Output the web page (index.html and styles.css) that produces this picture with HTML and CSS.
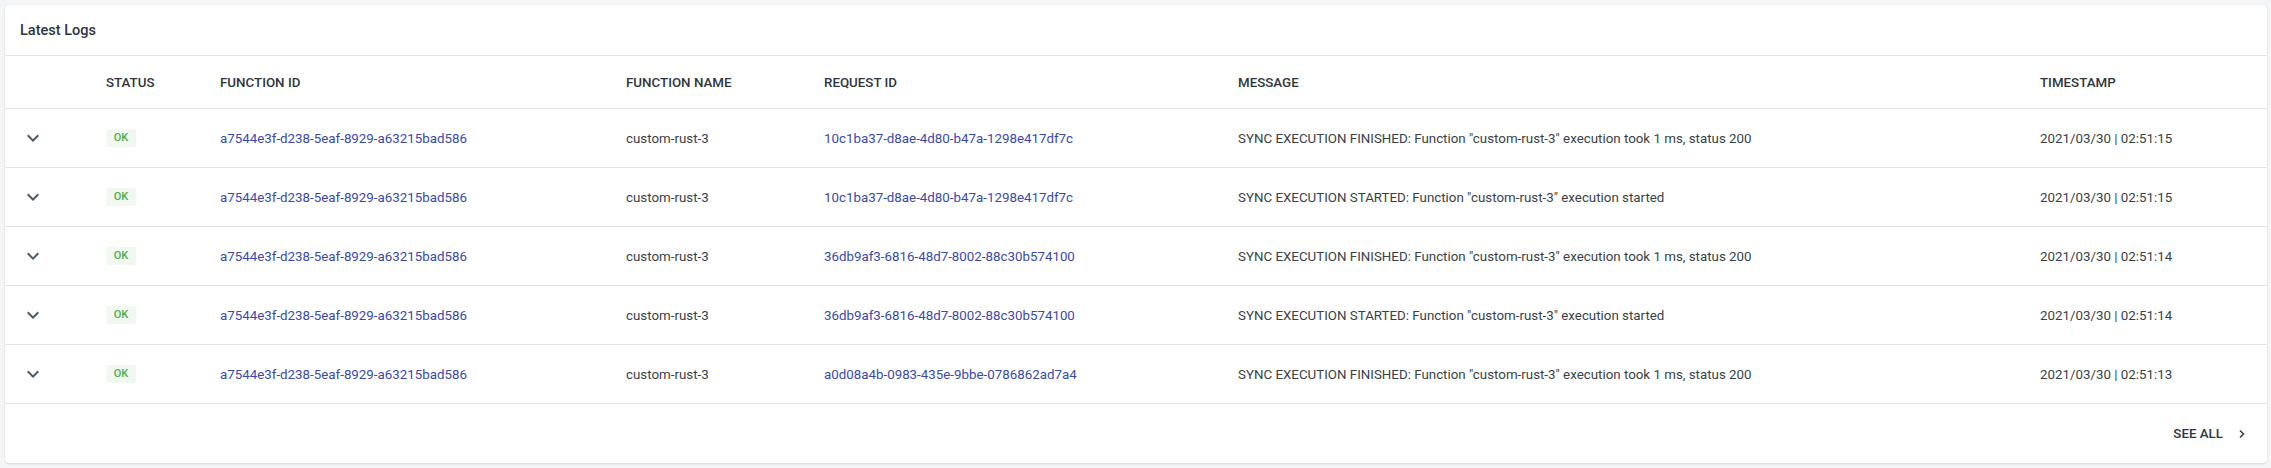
FILE: index.html
```html
<!DOCTYPE html>
<html>
<head>
<meta charset="utf-8">
<link rel="stylesheet" href="styles.css">
</head>
<body>
<div class="card">
  <div class="card-title">Latest Logs</div>
  <div class="table">
    <div class="row head">
      <div class="cell"></div>
      <div class="cell">Status</div>
      <div class="cell">Function ID</div>
      <div class="cell">Function Name</div>
      <div class="cell">Request ID</div>
      <div class="cell">Message</div>
      <div class="cell">Timestamp</div>
    </div>
    <div class="row">
      <div class="cell chev"><svg width="24" height="24" viewBox="0 0 24 24"><path d="M7.41 8.59 12 13.17l4.59-4.58L18 10l-6 6-6-6 1.41-1.41z"/></svg></div>
      <div class="cell"><span class="badge">OK</span></div>
      <div class="cell link">a7544e3f-d238-5eaf-8929-a63215bad586</div>
      <div class="cell">custom-rust-3</div>
      <div class="cell link">10c1ba37-d8ae-4d80-b47a-1298e417df7c</div>
      <div class="cell">SYNC EXECUTION FINISHED: Function "custom-rust-3" execution took 1 ms, status 200</div>
      <div class="cell">2021/03/30 | 02:51:15</div>
    </div>
    <div class="row">
      <div class="cell chev"><svg width="24" height="24" viewBox="0 0 24 24"><path d="M7.41 8.59 12 13.17l4.59-4.58L18 10l-6 6-6-6 1.41-1.41z"/></svg></div>
      <div class="cell"><span class="badge">OK</span></div>
      <div class="cell link">a7544e3f-d238-5eaf-8929-a63215bad586</div>
      <div class="cell">custom-rust-3</div>
      <div class="cell link">10c1ba37-d8ae-4d80-b47a-1298e417df7c</div>
      <div class="cell">SYNC EXECUTION STARTED: Function "custom-rust-3" execution started</div>
      <div class="cell">2021/03/30 | 02:51:15</div>
    </div>
    <div class="row">
      <div class="cell chev"><svg width="24" height="24" viewBox="0 0 24 24"><path d="M7.41 8.59 12 13.17l4.59-4.58L18 10l-6 6-6-6 1.41-1.41z"/></svg></div>
      <div class="cell"><span class="badge">OK</span></div>
      <div class="cell link">a7544e3f-d238-5eaf-8929-a63215bad586</div>
      <div class="cell">custom-rust-3</div>
      <div class="cell link">36db9af3-6816-48d7-8002-88c30b574100</div>
      <div class="cell">SYNC EXECUTION FINISHED: Function "custom-rust-3" execution took 1 ms, status 200</div>
      <div class="cell">2021/03/30 | 02:51:14</div>
    </div>
    <div class="row">
      <div class="cell chev"><svg width="24" height="24" viewBox="0 0 24 24"><path d="M7.41 8.59 12 13.17l4.59-4.58L18 10l-6 6-6-6 1.41-1.41z"/></svg></div>
      <div class="cell"><span class="badge">OK</span></div>
      <div class="cell link">a7544e3f-d238-5eaf-8929-a63215bad586</div>
      <div class="cell">custom-rust-3</div>
      <div class="cell link">36db9af3-6816-48d7-8002-88c30b574100</div>
      <div class="cell">SYNC EXECUTION STARTED: Function "custom-rust-3" execution started</div>
      <div class="cell">2021/03/30 | 02:51:14</div>
    </div>
    <div class="row">
      <div class="cell chev"><svg width="24" height="24" viewBox="0 0 24 24"><path d="M7.41 8.59 12 13.17l4.59-4.58L18 10l-6 6-6-6 1.41-1.41z"/></svg></div>
      <div class="cell"><span class="badge">OK</span></div>
      <div class="cell link">a7544e3f-d238-5eaf-8929-a63215bad586</div>
      <div class="cell">custom-rust-3</div>
      <div class="cell link">a0d08a4b-0983-435e-9bbe-0786862ad7a4</div>
      <div class="cell">SYNC EXECUTION FINISHED: Function "custom-rust-3" execution took 1 ms, status 200</div>
      <div class="cell">2021/03/30 | 02:51:13</div>
    </div>
  </div>
  <div class="card-footer">
    <span class="see-all">See all</span>
    <svg class="see-chev" width="8" height="10" viewBox="0 0 8 10"><path d="M2 1.5 5.5 5 2 8.5" fill="none" stroke="#3a4450" stroke-width="1.6"/></svg>
  </div>
</div>
</body>
</html>
```

FILE: styles.css
```css
html, body {
  margin: 0;
  padding: 0;
  background: #f4f5f7;
}
body {
  padding: 5px 4px 5px 5px;
  font-family: Roboto, "Liberation Sans", sans-serif;
  color: #333a41;
}
.card {
  background: #fff;
  border-radius: 4px;
  box-shadow: 0 1px 2px rgba(0,0,0,0.12), 0 0 1px rgba(0,0,0,0.08);
  overflow: hidden;
}
.card-title {
  height: 50px;
  display: flex;
  align-items: center;
  padding-left: 15px;
  font-size: 14.5px;
  font-weight: 500;
  color: #2f363d;
  border-bottom: 1px solid #e3e3e3;
}
.row {
  display: grid;
  grid-template-columns: 101px 114px 406px 198px 414px 802px 1fr;
  height: 58px;
  align-items: center;
  border-bottom: 1px solid #e3e3e3;
  font-size: 13.33px;
  color: #383f46;
}
.row.head {
  height: 52px;
  font-weight: 500;
  text-transform: uppercase;
  color: #2f363d;
}
.cell {
  white-space: nowrap;
}
.chev {
  display: flex;
  width: 24px;
  margin-left: 16px;
}
.chev svg {
  fill: #4b5b69;
}
.link {
  color: #3949ab;
}
.badge {
  display: inline-block;
  width: 30px;
  height: 18px;
  line-height: 18px;
  text-align: center;
  background: #f0f8ef;
  color: #4cae50;
  font-size: 11px;
  font-weight: 500;
  border-radius: 2px;
}
.card-footer {
  height: 59px;
  display: flex;
  align-items: center;
  justify-content: flex-end;
  padding-right: 21px;
  gap: 15px;
}
.see-all {
  font-size: 13.33px;
  font-weight: 500;
  text-transform: uppercase;
  color: #2f363d;
}
```
